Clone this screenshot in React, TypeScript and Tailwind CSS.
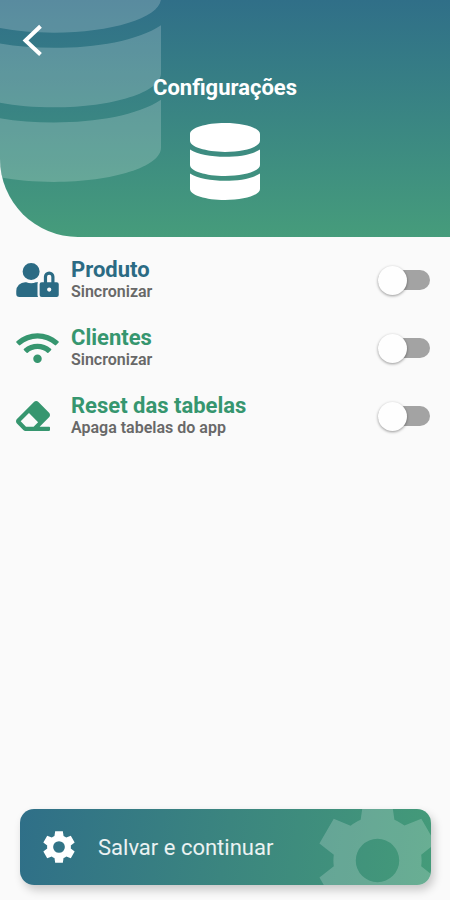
import { useState } from 'react';
import type { ComponentType } from 'react';
import { FaDatabase, FaEraser, FaUserLock, FaWifi } from 'react-icons/fa';

type Option = {
  id: string;
  title: string;
  subtitle: string;
  color: string;
  Icon: ComponentType<{ className?: string }>;
  iconClass: string;
};

const options: Option[] = [
  { id: 'produto', title: 'Produto', subtitle: 'Sincronizar', color: 'text-[#2b6b84]', Icon: FaUserLock, iconClass: 'w-[43px] h-[34px]' },
  { id: 'clientes', title: 'Clientes', subtitle: 'Sincronizar', color: 'text-[#36966f]', Icon: FaWifi, iconClass: 'w-[43px] h-[34px]' },
  { id: 'reset', title: 'Reset das tabelas', subtitle: 'Apaga tabelas do app', color: 'text-[#36966f]', Icon: FaEraser, iconClass: 'w-[34px] h-[34px]' },
];

function Gear({ className }: { className: string }) {
  return (
    <svg viewBox="0 0 24 24" fill="currentColor" fillRule="evenodd" aria-hidden="true" className={className}>
      <path d="M19.44 12.99c.04-.33.07-.65.07-.99s-.03-.66-.07-.99l2.45-1.9-2.43-4.22-2.87 1.17c-.52-.4-1.09-.74-1.71-1L14.44 2H9.57l-.44 3.07c-.62.26-1.19.6-1.71 1L4.55 4.89 2.11 9.11l2.45 1.9c-.04.33-.07.65-.07.99s.03.66.07.99l-2.44 1.91 2.43 4.2 2.87-1.15c.53.41 1.1.75 1.73 1.01L9.58 22h4.85l.44-3.04c.62-.26 1.2-.6 1.73-1.01l2.86 1.15 2.43-4.2zM12 15.7a3.7 3.7 0 1 1 0-7.4 3.7 3.7 0 0 1 0 7.4z" />
    </svg>
  );
}

function OptionRow({ id, title, subtitle, color, Icon, iconClass }: Option) {
  const [on, setOn] = useState(false);
  return (
    <label htmlFor={id} className="flex h-[68px] items-center gap-3 pl-4 pr-5">
      <span className={`w-[43px] shrink-0 ${color}`}>
        <Icon className={iconClass} />
      </span>
      <span className="flex flex-1 flex-col">
        <span className={`text-[22px] leading-6 font-bold ${color}`}>{title}</span>
        <span className="text-base leading-5 font-semibold text-[#686868]">{subtitle}</span>
      </span>
      <input
        id={id}
        type="checkbox"
        checked={on}
        onChange={(e) => setOn(e.target.checked)}
        className="flex h-5 w-[52px] shrink-0 appearance-none items-center rounded-full bg-[#a3a3a3] before:block before:size-[29px] before:shrink-0 before:rounded-full before:bg-[#fefefe] before:shadow-[0_1px_3px_rgba(0,0,0,0.4)] checked:bg-[#8cc4ae] checked:before:translate-x-6"
      />
    </label>
  );
}

export default function App() {
  return (
    <div className="flex min-h-screen flex-col bg-[#fafafa] font-[Roboto,sans-serif]">
      <header className="relative h-[237px] overflow-hidden rounded-bl-[78px] bg-linear-to-b from-[#306f88] to-[#469c7b]">
        <FaDatabase
          aria-hidden="true"
          preserveAspectRatio="none"
          className="absolute -top-[57px] -left-[53px] h-[239px] w-[214px] text-white/20"
        />
        <div className="relative flex flex-col items-center">
          <button type="button" aria-label="Voltar" className="mt-6 ml-5 self-start text-white">
            <svg viewBox="0 0 24 34" className="h-[34px] w-6" fill="none" stroke="currentColor" strokeWidth="4">
              <path d="M20.5 2.3 5.5 16.5 20.5 30.5" />
            </svg>
          </button>
          <h1 className="mt-4 text-[22px] leading-7 font-bold text-white">Configurações</h1>
          <FaDatabase aria-hidden="true" preserveAspectRatio="none" className="mt-[21px] h-[77px] w-[70px] text-white" />
        </div>
      </header>

      <main className="flex flex-1 flex-col pt-[9px]">
        {options.map((option) => (
          <OptionRow key={option.id} {...option} />
        ))}
      </main>

      <footer className="pr-[19px] pb-[15px] pl-5">
        <button
          type="button"
          className="relative flex h-[76px] w-full items-center gap-5 overflow-hidden rounded-[14px] bg-linear-[100deg] from-[#2f6f88] via-[#3b857f] to-[#449b79] px-5 text-[22px] text-white shadow-[3px_5px_10px_rgba(0,0,0,0.2)]"
        >
          <Gear className="size-[38px]" />
          <span className="text-white/90">Salvar e continuar</span>
          <Gear className="absolute -top-[19px] -right-[17px] size-[141px] text-white/20" />
        </button>
      </footer>
    </div>
  );
}
